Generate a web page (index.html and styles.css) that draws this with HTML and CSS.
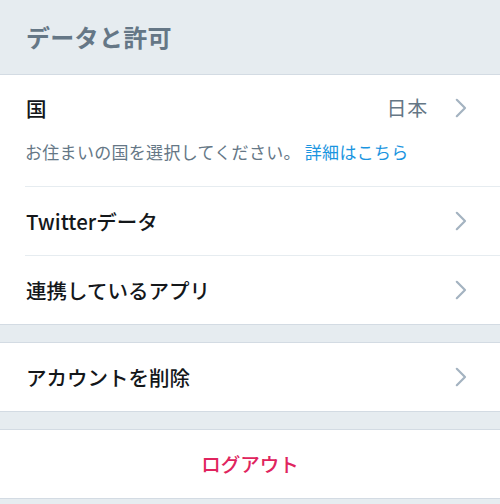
FILE: index.html
```html
<!DOCTYPE html>
<html lang="ja">
<head>
<meta charset="utf-8">
<title>データと許可</title>
<link rel="stylesheet" href="styles.css">
</head>
<body>
<header class="header"><h1 class="title">データと許可</h1></header>
<section class="group group-first">
  <div class="item item-country">
    <div class="row">
      <span class="label">国</span>
      <span class="value">日本</span>
      <svg class="chev" width="12" height="20" viewBox="0 0 12 20"><path d="M1.8 1.8 L10 10 L1.8 18.2" fill="none" stroke="#a4b3c1" stroke-width="2.2" stroke-linecap="round" stroke-linejoin="round"/></svg>
    </div>
    <p class="desc">お住まいの国を選択してください。<a class="link" href="#">詳細はこちら</a></p>
  </div>
  <div class="item">
    <div class="row">
      <span class="label">Twitterデータ</span>
      <svg class="chev" width="12" height="20" viewBox="0 0 12 20"><path d="M1.8 1.8 L10 10 L1.8 18.2" fill="none" stroke="#a4b3c1" stroke-width="2.2" stroke-linecap="round" stroke-linejoin="round"/></svg>
    </div>
  </div>
  <div class="item item-last">
    <div class="row">
      <span class="label">連携しているアプリ</span>
      <svg class="chev" width="12" height="20" viewBox="0 0 12 20"><path d="M1.8 1.8 L10 10 L1.8 18.2" fill="none" stroke="#a4b3c1" stroke-width="2.2" stroke-linecap="round" stroke-linejoin="round"/></svg>
    </div>
  </div>
</section>
<div class="gap"></div>
<section class="group">
  <div class="item item-last">
    <div class="row">
      <span class="label">アカウントを削除</span>
      <svg class="chev" width="12" height="20" viewBox="0 0 12 20"><path d="M1.8 1.8 L10 10 L1.8 18.2" fill="none" stroke="#a4b3c1" stroke-width="2.2" stroke-linecap="round" stroke-linejoin="round"/></svg>
    </div>
  </div>
</section>
<div class="gap"></div>
<section class="group">
  <div class="item item-last item-center">
    <span class="logout">ログアウト</span>
  </div>
</section>
</body>
</html>
```

FILE: styles.css
```css
* { box-sizing: border-box; }
html, body { margin: 0; padding: 0; }
body {
  width: 500px;
  min-height: 504px;
  background: #e6ecf0;
  font-family: "Noto Sans CJK JP", "Noto Sans", sans-serif;
  color: #14171a;
  overflow: hidden;
}
.header {
  height: 75px;
  border-bottom: 1px solid #d3dbe3;
  display: flex;
  align-items: center;
  padding: 0 0 0 26px;
}
.title {
  margin: 0;
  font-size: 24px;
  font-weight: 700;
  letter-spacing: 0.3px;
  color: #657786;
  line-height: 1;
  padding-bottom: 1px;
}
.group {
  background: #fff;
  border-top: 1px solid #d3dbe3;
  border-bottom: 1px solid #d3dbe3;
}
.group-first { border-top: none; }
.item {
  margin-left: 25px;
  border-bottom: 1px solid #e6ecf0;
  height: 69px;
  display: flex;
  flex-direction: column;
  justify-content: center;
}
.item-last { border-bottom: none; height: 68px; }
.item-country {
  height: 112px;
  justify-content: flex-start;
  padding-top: 13px;
}
.row {
  display: flex;
  align-items: center;
  height: 40px;
  padding-right: 33px;
}
.label {
  flex: 1;
  font-size: 20.5px;
  font-weight: 500;
  letter-spacing: 0;
  line-height: 1;
  margin-left: 1px;
}
.value {
  font-size: 20px;
  color: #657786;
  letter-spacing: 0.8px;
  margin-right: 27px;
  line-height: 1;
}
.chev { display: block; flex: none; }
.desc {
  margin: 12px 0 0 0;
  font-size: 17px;
  line-height: 24px;
  color: #657786;
  letter-spacing: 0.3px;
}
.link { color: #1b95e0; text-decoration: none; margin-left: 4px; }
.gap { height: 17px; }
.item-center {
  margin-left: 0;
  align-items: center;
}
.logout {
  font-size: 19.5px;
  font-weight: 500;
  color: #e0245e;
  letter-spacing: 0;
  line-height: 1;
}
```
